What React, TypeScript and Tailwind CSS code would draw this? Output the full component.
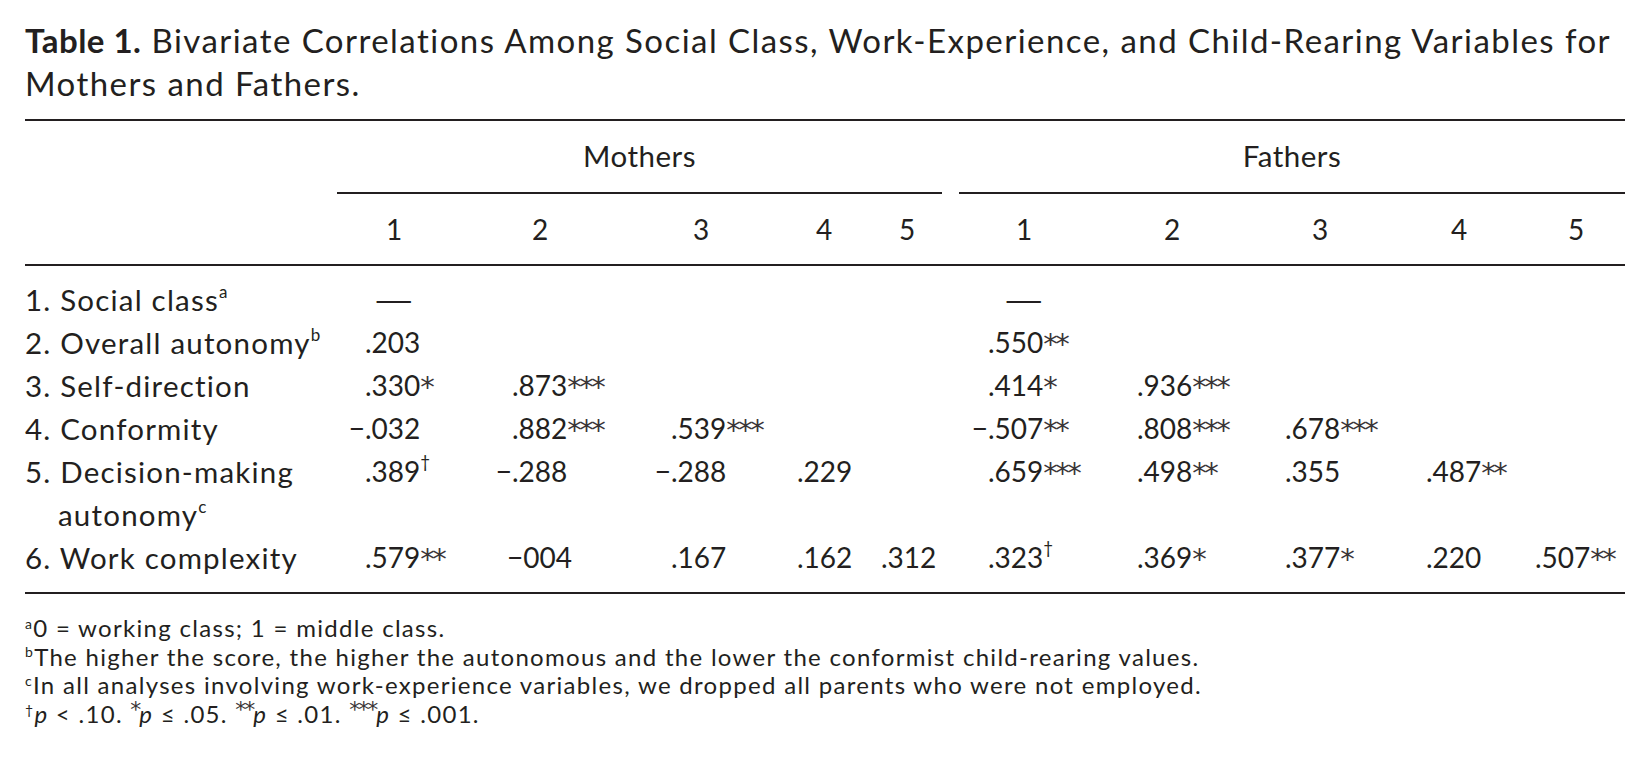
import React from "react";

type Row = { label: React.ReactNode; m: string[]; f: string[]; two?: React.ReactNode };

const supCls = "text-[17px] -top-[0.75em] tracking-normal";

const rows: Row[] = [
  {
    label: (
      <>
        1. Social class<sup className={supCls}>a</sup>
      </>
    ),
    m: ["—", "", "", "", ""],
    f: ["—", "", "", "", ""],
  },
  {
    label: (
      <>
        2. Overall autonomy<sup className={supCls}>b</sup>
      </>
    ),
    m: [".203", "", "", "", ""],
    f: [".550**", "", "", "", ""],
  },
  {
    label: <>3. Self-direction</>,
    m: [".330*", ".873***", "", "", ""],
    f: [".414*", ".936***", "", "", ""],
  },
  {
    label: <>4. Conformity</>,
    m: ["−.032", ".882***", ".539***", "", ""],
    f: ["−.507**", ".808***", ".678***", "", ""],
  },
  {
    label: <>5. Decision-making</>,
    two: (
      <>
        autonomy<sup className={supCls}>c</sup>
      </>
    ),
    m: [".389†", "−.288", "−.288", ".229", ""],
    f: [".659***", ".498**", ".355", ".487**", ""],
  },
  {
    label: <>6. Work complexity</>,
    m: [".579**", "−004", ".167", ".162", ".312"],
    f: [".323†", ".369*", ".377*", ".220", ".507**"],
  },
];

const mCenters = ["w-[94px]", "w-[92px]", "w-[96px]", "w-[90px]", "w-[88px]"];
const fCenters = ["w-[108px]", "w-[106px]", "w-[106px]", "w-[102px]", "w-[118px]"];

function Num({ v, center }: { v: string; center: string }) {
  if (!v) return <div />;
  if (v === "—") {
    return (
      <div className={`${center} text-center`}>
        <span className="inline-block scale-x-[1.75]">—</span>
      </div>
    );
  }
  let sign = "";
  let rest = v;
  if (v.startsWith("−.")) {
    sign = "−";
    rest = v.slice(1);
  }
  const match = rest.match(/^([^*†]*)([*†]*)$/);
  const base = match ? match[1] : rest;
  const mark = match ? match[2] : "";
  return (
    <div className="flex items-baseline whitespace-nowrap text-[28px]">
      <span className="w-[18px] shrink-0 text-right">{sign}</span>
      <span className={base.startsWith("−0") ? "-ml-[5px]" : ""}>{base}</span>
      {mark === "†" ? (
        <sup className="text-[17px] -top-[0.8em]">†</sup>
      ) : mark ? (
        <span className="relative top-[1px] font-['DejaVu_Sans',sans-serif] text-[29px] leading-none tracking-[-2.5px] text-[#3a3637]">
          {mark}
        </span>
      ) : null}
    </div>
  );
}

export default function App() {
  const rule = "h-[2px] bg-[#231f20]";
  const grid =
    "grid grid-cols-[322px_147px_159px_126px_84px_107px_149px_148px_141px_109px_108px]";
  const fnStar =
    "font-['DejaVu_Sans',sans-serif] text-[22px] -top-[0.3em] tracking-[-2px] text-[#3a3637]";
  return (
    <div className="w-[1651px] h-[780px] bg-white text-[#231f20] font-['Lato',sans-serif] overflow-hidden">
      <div className="ml-[25px] w-[1600px] pt-[19px]">
        <div className="text-[33px] leading-[43px] tracking-[1.45px] whitespace-nowrap">
          <span className="font-bold tracking-[0.5px]">Table 1.</span>
          <span className="ml-[10px]">
            Bivariate Correlations Among Social Class, Work-Experience, and Child-Rearing Variables for
          </span>
          <br />
          Mothers and Fathers.
        </div>

        <div className={`mt-[14px] ${rule}`} />

        <div className="text-[29.5px]">
          {/* group header */}
          <div className="flex tracking-[0.5px]">
            <div className="ml-[312px] w-[605px] flex flex-col">
              <div className="h-[71px] flex items-center justify-center">Mothers</div>
              <div className={rule} />
            </div>
            <div className="ml-[17px] w-[666px] flex flex-col">
              <div className="h-[71px] flex items-center justify-center">Fathers</div>
              <div className={rule} />
            </div>
          </div>

          {/* column numbers */}
          <div className={`${grid} h-[70px] items-center text-[28px]`}>
            <div />
            {mCenters.map((c, i) => (
              <div key={"m" + i} className={`${c} text-center`}>
                {i + 1}
              </div>
            ))}
            {fCenters.map((c, i) => (
              <div key={"f" + i} className={`${c} text-center`}>
                {i + 1}
              </div>
            ))}
          </div>
          <div className={rule} />

          {/* body */}
          <div className="pt-[12px] pb-[13px]">
            {rows.map((r, ri) => (
              <div key={ri} className={`${grid} leading-[43px]`}>
                <div className="whitespace-nowrap tracking-[1.2px]">
                  <div>{r.label}</div>
                  {r.two && <div className="pl-[33px]">{r.two}</div>}
                </div>
                {r.m.map((v, i) => (
                  <Num key={"m" + i} v={v} center={mCenters[i]} />
                ))}
                {r.f.map((v, i) => (
                  <Num key={"f" + i} v={v} center={fCenters[i]} />
                ))}
              </div>
            ))}
          </div>
          <div className={rule} />
        </div>

        <div className="mt-[20px] text-[24px] leading-[28.7px] tracking-[1.3px] whitespace-nowrap">
          <div>
            <sup className="text-[14px] -top-[0.6em]">a</sup>0 = working class; 1 = middle class.
          </div>
          <div>
            <sup className="text-[14px] -top-[0.6em]">b</sup>The higher the score, the higher the autonomous and the lower the
            conformist child-rearing values.
          </div>
          <div>
            <sup className="text-[14px] -top-[0.6em]">c</sup>In all analyses involving work-experience variables, we dropped
            all parents who were not employed.
          </div>
          <div>
            <sup className="text-[14px] -top-[0.6em]">†</sup>
            <i>p</i> &lt; .10. <sup className={fnStar}>*</sup>
            <i>p</i> ≤ .05. <sup className={fnStar}>**</sup>
            <i>p</i> ≤ .01. <sup className={fnStar}>***</sup>
            <i>p</i> ≤ .001.
          </div>
        </div>
      </div>
    </div>
  );
}
